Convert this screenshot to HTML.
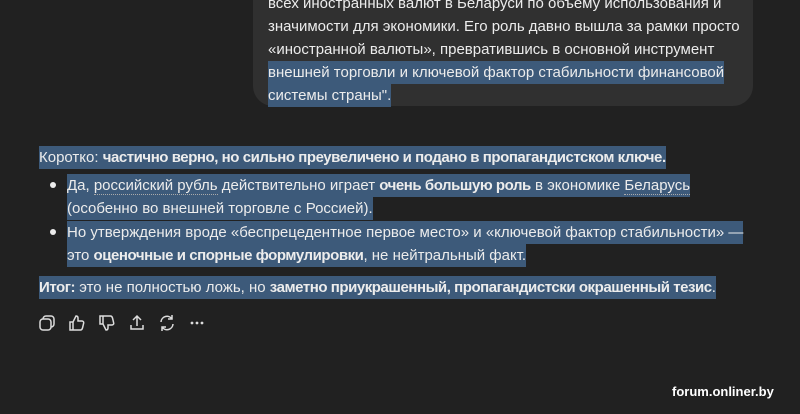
<!DOCTYPE html>
<html><head><meta charset="utf-8"><style>
body{margin:0;width:800px;height:414px;background:#212121;overflow:hidden;font-family:"Liberation Sans","DejaVu Sans",sans-serif;color:#ececec;font-size:15px;letter-spacing:0;position:relative}
.s{background:#3d5a7a;padding:3px 0 3px 0}
.bub{position:absolute;left:253px;top:-30px;width:500px;height:136px;background:#303030;border-radius:0 0 20px 20px}
.bub p{margin:0;position:absolute;left:15px;top:22px;line-height:23px;width:485px;white-space:nowrap}
.l{position:absolute;line-height:23px;white-space:nowrap}
b{font-weight:bold;letter-spacing:-0.45px}
u{text-decoration:none;border-bottom:1px dotted #aaa}
.dot{position:absolute;width:6px;height:6px;border-radius:50%;background:#ececec}
.ic{position:absolute;top:314px}
.wm{position:absolute;left:672px;top:384px;font-weight:bold;font-size:13px;color:#fff;letter-spacing:0}
</style></head><body>
<div class="bub"><p>всех иностранных валют в Беларуси по объему использования и<br>значимости для экономики. Его роль давно вышла за рамки просто<br>«иностранной валюты», превратившись в основной инструмент<br><span class="s">внешней торговли и ключевой фактор стабильности финансовой </span><br><span class="s">системы страны". </span></p></div>
<div class="l" style="left:39px;top:146px"><span class="s">Коротко: <b>частично верно, но сильно преувеличено и подано в пропагандистском ключе.</b></span></div>
<div class="dot" style="left:50px;top:182px"></div>
<div class="l" style="left:67px;top:174px"><span class="s">Да, <u>российский рубль</u> действительно играет <b>очень большую роль</b> в экономике <u>Беларусь</u> </span></div>
<div class="l" style="left:67px;top:197px"><span class="s">(особенно во внешней торговле с Россией).</span></div>
<div class="dot" style="left:50px;top:229px"></div>
<div class="l" style="left:67px;top:221px"><span class="s">Но утверждения вроде «беспрецедентное первое место» и «ключевой фактор стабильности» —</span></div>
<div class="l" style="left:67px;top:244px"><span class="s">это <b>оценочные и спорные формулировки</b>, не нейтральный факт.</span></div>
<div class="l" style="left:39px;top:276px"><span class="s"><b>Итог:</b> это не полностью ложь, но <b>заметно приукрашенный, пропагандистски окрашенный тезис</b>.</span></div>
<svg class="ic" style="left:38px" width="18" height="18" viewBox="0 0 18 18" fill="none" stroke="#ddd" stroke-width="1.5"><rect x="5" y="2" width="11" height="11" rx="3"/><rect x="2" y="5" width="11" height="11" rx="3" fill="#212121"/></svg>
<svg class="ic" style="left:68px" width="18" height="18" viewBox="0 0 18 18" fill="none" stroke="#ddd" stroke-width="1.5"><path d="M2 8h3v8H2zM5 8l3-6c1.5 0 2 1 2 2v3h4c1 0 2 1 1.7 2l-1.2 5c-.3 1-1 2-2 2H5"/></svg>
<svg class="ic" style="left:98px" width="18" height="18" viewBox="0 0 18 18" fill="none" stroke="#ddd" stroke-width="1.5"><path d="M2 2h3v8H2zM5 10l3 6c1.5 0 2-1 2-2v-3h4c1 0 2-1 1.7-2l-1.2-5c-.3-1-1-2-2-2H5"/></svg>
<svg class="ic" style="left:128px" width="18" height="18" viewBox="0 0 18 18" fill="none" stroke="#ddd" stroke-width="1.5"><path d="M9 12V2M5 6l4-4 4 4M3 11v4h12v-4"/></svg>
<svg class="ic" style="left:158px" width="18" height="18" viewBox="0 0 18 18" fill="none" stroke="#ddd" stroke-width="1.5"><path d="M3 8a6 6 0 0 1 11-3M15 10a6 6 0 0 1-11 3M14 1v4h-4M4 17v-4h4"/></svg>
<svg class="ic" style="left:188px" width="18" height="18" viewBox="0 0 18 18" fill="#ddd"><circle cx="4" cy="9" r="1.4"/><circle cx="9" cy="9" r="1.4"/><circle cx="14" cy="9" r="1.4"/></svg>
<div class="wm">forum.onliner.by</div>
</body></html>
